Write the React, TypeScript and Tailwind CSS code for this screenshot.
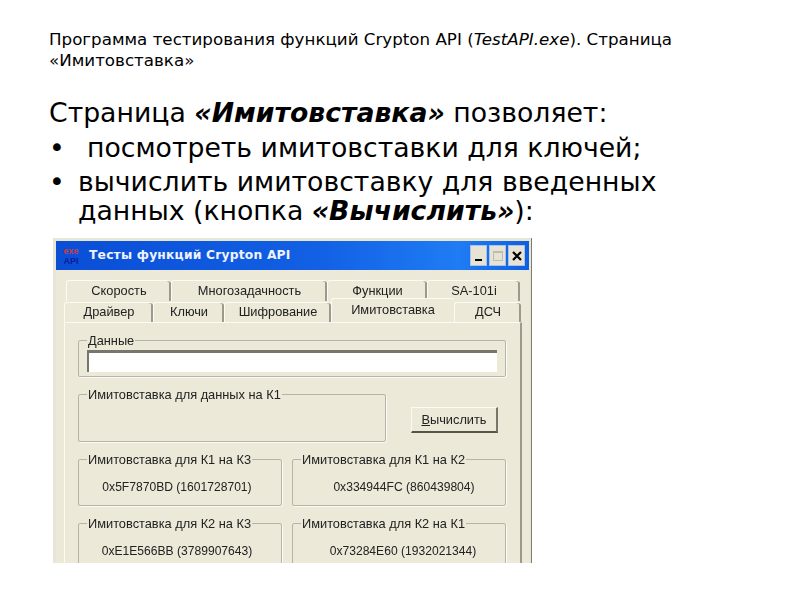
const tabBase = "flex items-center justify-center bg-[#ece9d8] rounded-t-[3px] border-t border-l border-[#fbfaf3] shadow-[inset_-2px_0_0_#9b9a8c] pb-[1px]";

function Tab({ w, label, className = "" }: { w: string; label: string; className?: string }) {
  return <div className={`${tabBase} ${w} ${className}`}>{label}</div>;
}

function Group({ title, className = "", children }: { title: string; className?: string; children?: React.ReactNode }) {
  return (
    <fieldset className={`border border-[#b5b4a6] shadow-[1px_1px_0_#fbfaf3] rounded-[2px] ${className}`}>
      <legend className="ml-[8px] px-[1px] leading-[13px]">{title}</legend>
      {children}
    </fieldset>
  );
}

function ValueGroup({ title, value, className = "" }: { title: string; value: string; className?: string }) {
  return (
    <Group title={title} className="h-[53px]">
      <div className={`text-center pt-[14px] leading-[14px] text-[12.1px] ${className}`}>{value}</div>
    </Group>
  );
}

export default function App() {
  return (
    <div className="w-[800px] h-[600px] overflow-hidden bg-white text-black font-['DejaVu_Sans',sans-serif]">
      <div className="pl-[49px] pt-[29px] pr-[60px]">
        <h1 className="text-[16.7px] leading-[21px] font-normal whitespace-nowrap">
          Программа тестирования функций Crypton API (<i>TestAPI.exe</i>). Страница
          <br />
          «Имитовставка»
        </h1>
        <p className="mt-[24px] text-[26.7px] leading-[35px] whitespace-nowrap">
          Страница <b><i>«Имитовставка»</i></b> позволяет:
        </p>
        <div className="flex text-[26.7px] leading-[35px] whitespace-nowrap">
          <span className="w-[38px]">•</span>
          <span>посмотреть имитовставки для ключей;</span>
        </div>
        <div className="flex text-[26.7px] leading-[29px] mt-[2px] whitespace-nowrap">
          <span className="w-[29px]">•</span>
          <span>
            вычислить имитовставку для введенных
            <br />
            данных (кнопка <b><i>«Вычислить»</i></b>):
          </span>
        </div>
      </div>

      <div className="mt-[13px] ml-[53px] w-[478px] h-[325px] overflow-hidden bg-[#ece9d8] border-t-[3px] border-l-[3px] border-r-[2px] border-[#e8e6d6] shadow-[1px_0_0_#7d7c70] blur-[0.4px] font-['Liberation_Sans',sans-serif] text-[12.8px] text-[#222]">
        <div className="h-[29px] flex items-center bg-[linear-gradient(90deg,#0a4ed6_0%,#1260e4_55%,#1f7cf4_85%,#0f5fe0_100%)]">
          <div className="ml-[5px] w-[20px] h-[22px] flex flex-col items-center justify-center font-bold text-[9px] leading-[10px]">
            <span className="text-[#c8404c]">exe</span>
            <span className="text-[#0c1c9c]">API</span>
          </div>
          <span className="ml-[8px] font-['DejaVu_Sans',sans-serif] font-bold text-[12.3px] text-[#eef4ff] tracking-[0.2px]">
            Тесты функций Crypton API
          </span>
          <div className="ml-auto mr-[4px] flex gap-[2px]">
            <div className="w-[17px] h-[21px] flex items-end justify-center pb-[4px] bg-[#e6e3d4] border border-[#a9c3e8]">
              <div className="w-[7px] h-[2px] bg-black" />
            </div>
            <div className="w-[17px] h-[21px] flex items-center justify-center bg-[#e6e3d4] border border-[#a9c3e8]">
              <div className="w-[10px] h-[10px] border border-[#bdbcae] border-t-2" />
            </div>
            <div className="w-[17px] h-[21px] flex items-center justify-center bg-[#e6e3d4] border border-[#a9c3e8]">
              <svg width="10" height="10" viewBox="0 0 10 10" stroke="black" strokeWidth="2.2"><path d="M1 1l8 8M9 1l-8 8" /></svg>
            </div>
          </div>
        </div>

        <div className="pt-[10px] pl-[8px]">
          <div className="ml-[2px] h-[21px] flex">
            <Tab w="w-[105px]" label="Скорость" />
            <Tab w="w-[156px]" label="Многозадачность" />
            <Tab w="w-[100px]" label="Функции" />
            <Tab w="w-[93px]" label="SA-101i" />
          </div>
          <div className="h-[21px] flex items-end">
            <Tab w="w-[89px]" label="Драйвер" className="h-[20px]" />
            <Tab w="w-[71px]" label="Ключи" className="h-[20px]" />
            <Tab w="w-[107px]" label="Шифрование" className="h-[20px]" />
            <Tab w="w-[123px]" label="Имитовставка" className="h-[24px] relative z-10 shadow-none pb-[2px]" />
            <Tab w="w-[67px]" label="ДСЧ" className="h-[20px]" />
          </div>
          <div className="w-[458px] h-[245px] border-t border-l border-[#fbfaf3] border-r-2 border-r-[#9b9a8c] pt-[11px] pl-[13px]">
            <Group title="Данные" className="h-[43px] w-[428px]">
              <div className="mx-[8px] mt-[3px] h-[22px] bg-white border-t-[3px] border-l-2 border-[#77766a]" />
            </Group>

            <div className="mt-[11px] flex w-[428px]">
              <Group title="Имитовставка для данных на К1" className="h-[54px] w-[308px]" />
              <div className="ml-[25px] mt-[19px] w-[87px] h-[26px] flex items-center justify-center bg-[#ece9d8] border border-t-[#fbfaf3] border-l-[#fbfaf3] border-r-[#77766a] border-b-[#55544a] border-b-2 border-r-2">
                <span><u>В</u>ычислить</span>
              </div>
            </div>

            <div className="mt-[11px] w-[428px] grid grid-cols-[204px_214px] gap-x-[10px] gap-y-[11px]">
              <ValueGroup title="Имитовставка для К1 на К3" value="0x5F7870BD (1601728701)" className="pr-[6px]" />
              <ValueGroup title="Имитовставка для К1 на К2" value="0x334944FC (860439804)" className="pl-[10px]" />
              <ValueGroup title="Имитовставка для К2 на К3" value="0xE1E566BB (3789907643)" className="pr-[6px]" />
              <ValueGroup title="Имитовставка для К2 на К1" value="0x73284E60 (1932021344)" className="pl-[8px]" />
            </div>
          </div>
        </div>
      </div>
    </div>
  );
}
